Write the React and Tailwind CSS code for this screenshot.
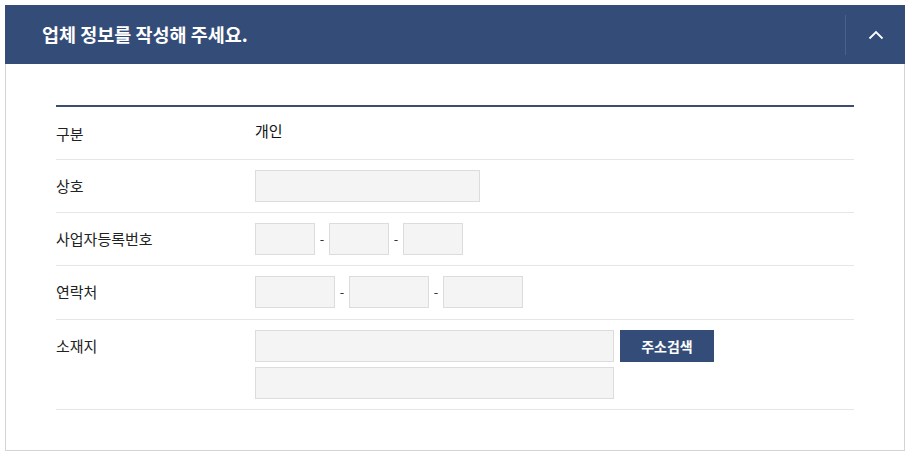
import React from "react";

const Field = ({ w }) => (
  <div className={`h-8 ${w} bg-[#f4f4f4] border border-[#dcdcdc]`}></div>
);

const Dash = () => <span className="w-[14px] text-center text-[13px] text-[#333]">-</span>;

const Row = ({ label, children, top, tall }) => (
  <div
    className={`flex border-b border-[#e6e6e6] ${tall ? "pt-[10px] pb-[11px]" : "py-[10px]"} ${top ? "items-start" : "items-center"}`}
  >
    <div className={`w-[199px] text-[15px] text-[#222] ${top ? "leading-8" : ""}`}>{label}</div>
    <div className="flex-1">{children}</div>
  </div>
);

const App = () => {
  return (
    <div
      className="w-[910px] bg-white p-[5px] pb-[9px]"
      style={{ fontFamily: '"Noto Sans CJK KR", "Noto Sans", sans-serif' }}
    >
      <div className="flex h-[59px] items-center bg-[#344d78]">
        <h1 className="flex-1 pl-[37px] text-[18.5px] font-bold text-white">업체 정보를 작성해 주세요.</h1>
        <div className="h-10 w-px bg-[#4a6189]"></div>
        <button className="flex w-[59px] items-center justify-center text-white">
          <svg width="16" height="10" viewBox="0 0 16 10" fill="none">
            <path d="M1.5 8.5 L8 2 L14.5 8.5" stroke="white" strokeWidth="1.8" />
          </svg>
        </button>
      </div>

      <div className="border border-t-0 border-[#d4d4d4] px-[50px] pt-[41px] pb-[40px]">
        <div className="border-t-2 border-[#3b4f6d]">
          <div className="flex h-[53px] items-center border-b border-[#e6e6e6]">
            <div className="w-[199px] pt-[2px] text-[15px] text-[#222]">구분</div>
            <div className="pb-[4px] text-[15px] text-[#111]">개인</div>
          </div>

          <Row label="상호">
            <Field w="w-[225px]" />
          </Row>

          <Row label="사업자등록번호">
            <div className="flex items-center">
              <Field w="w-[60px]" />
              <Dash />
              <Field w="w-[60px]" />
              <Dash />
              <Field w="w-[60px]" />
            </div>
          </Row>

          <Row label="연락처" tall>
            <div className="flex items-center">
              <Field w="w-[80px]" />
              <Dash />
              <Field w="w-[80px]" />
              <Dash />
              <Field w="w-[80px]" />
            </div>
          </Row>

          <Row label="소재지" top>
            <div className="flex flex-col gap-[5px]">
              <div className="flex items-center gap-[6px]">
                <Field w="w-[359px]" />
                <button className="h-8 w-[94px] bg-[#344d78] text-[14px] font-bold text-white">
                  주소검색
                </button>
              </div>
              <Field w="w-[359px]" />
            </div>
          </Row>
        </div>
      </div>
    </div>
  );
};

export default App;
